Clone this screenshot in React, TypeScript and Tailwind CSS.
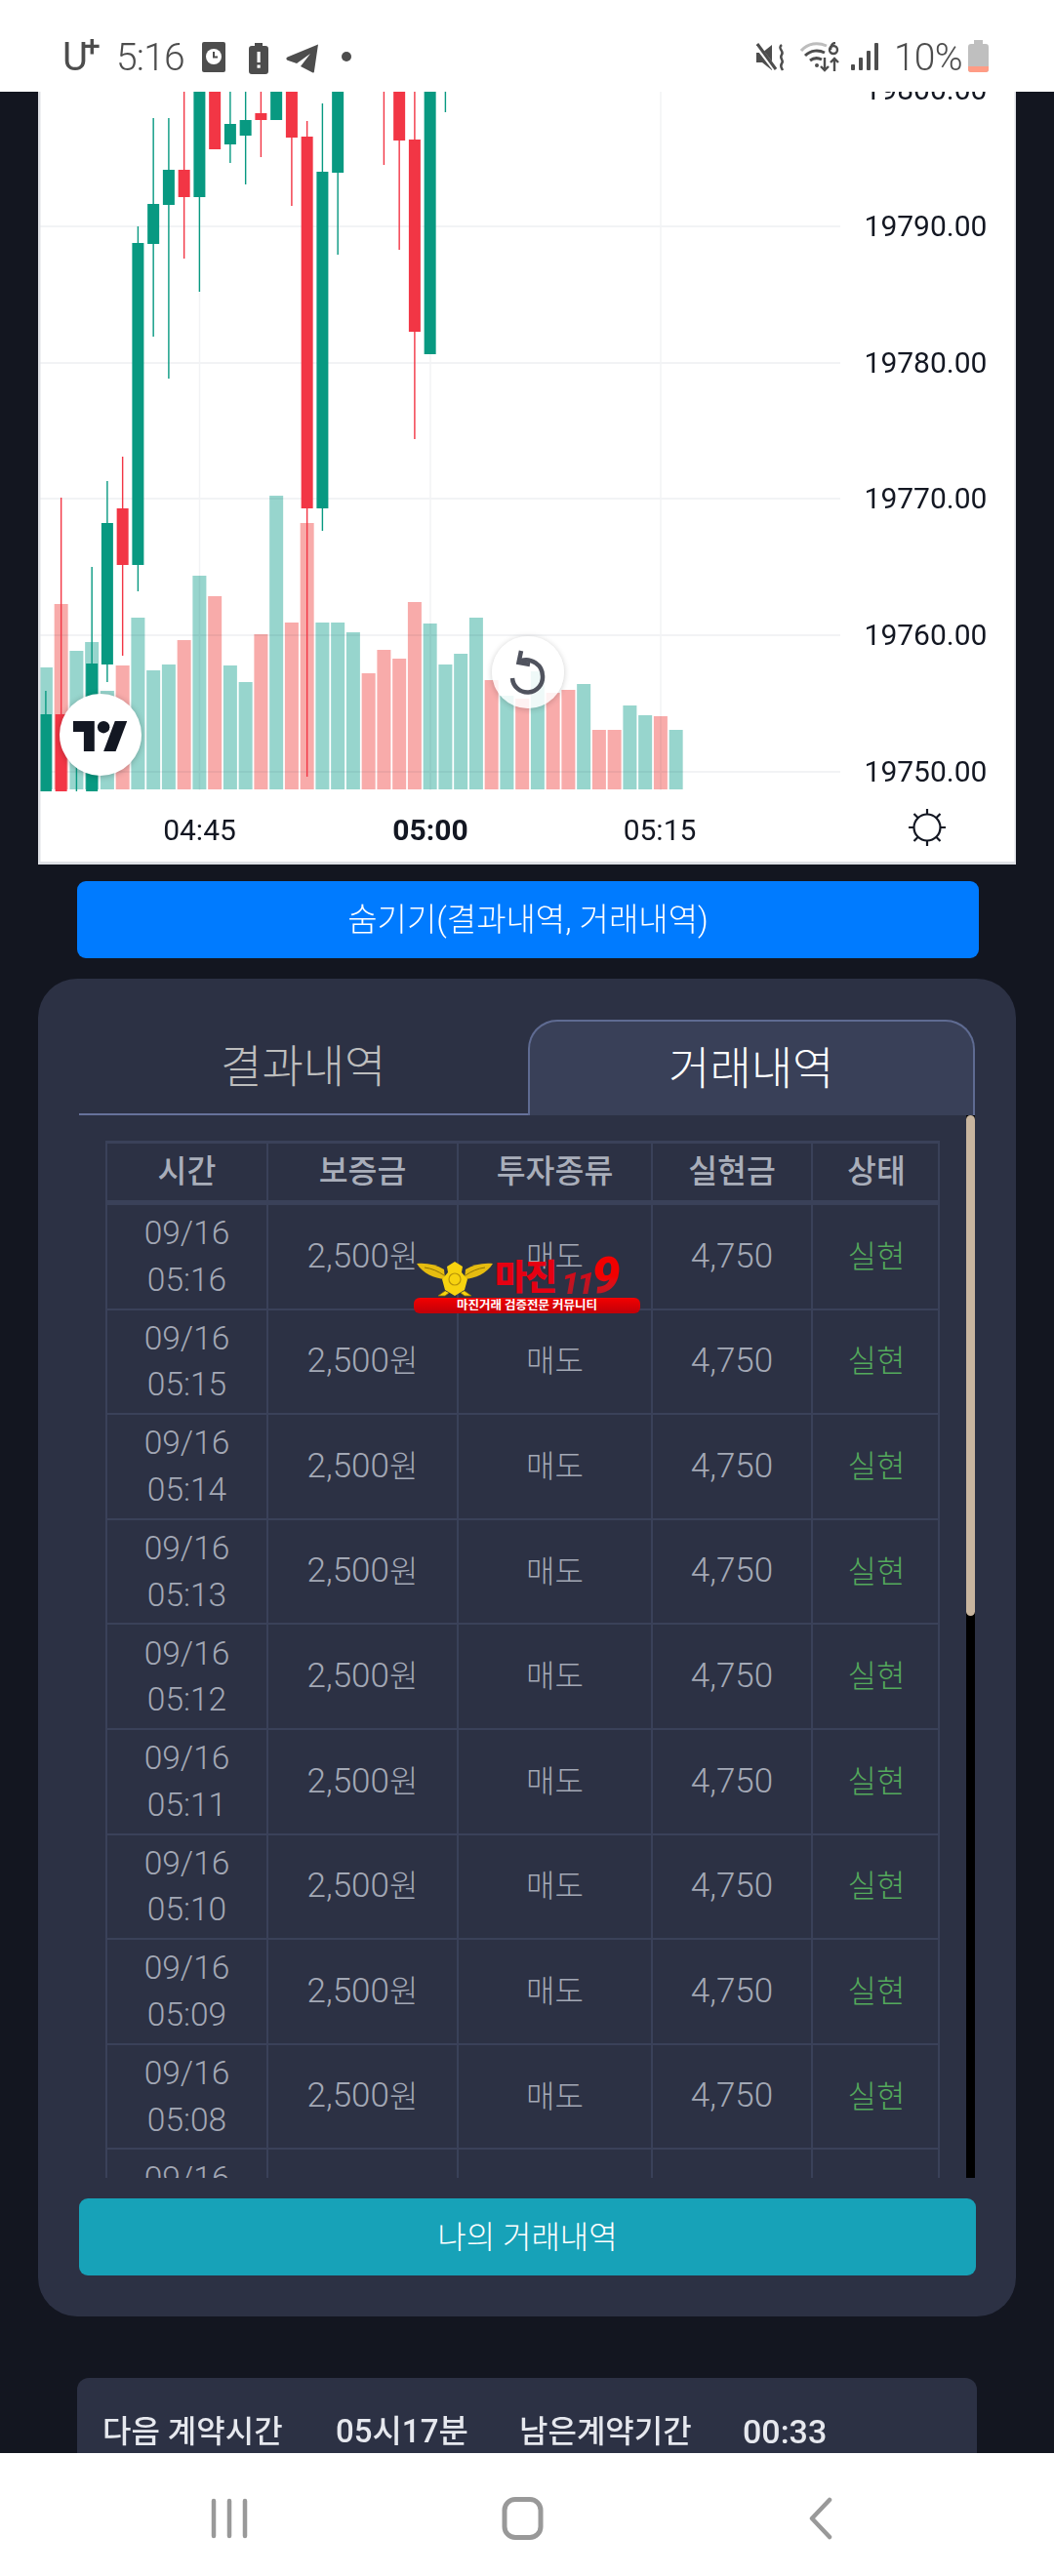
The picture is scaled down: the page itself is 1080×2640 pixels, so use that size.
import React from "react";

const G = "#089981";
const R = "#f23645";
type C = [number, string, number, number, number, number];
// index, colour, wickTop, bodyTop, bodyBottom, wickBottom
const candles: C[] = [
  [0, G, 708, 732, 815, 815],
  [1, R, 510, 732, 815, 815],
  [2, G, 780, 815, 815, 815],
  [3, G, 581, 680, 815, 815],
  [4, G, 493, 536, 681, 699],
  [5, R, 468, 521, 579, 672],
  [6, G, 232, 249, 579, 606],
  [7, G, 121, 209, 250, 345],
  [8, G, 121, 174, 210, 388],
  [9, R, 90, 174, 202, 265],
  [10, G, 90, 90, 202, 299],
  [11, R, 90, 90, 153, 153],
  [12, G, 90, 127, 148, 167],
  [13, G, 90, 123, 139, 189],
  [14, R, 90, 116, 123, 161],
  [15, G, 90, 90, 123, 123],
  [16, R, 90, 90, 141, 211],
  [17, R, 124, 140, 521, 796],
  [18, G, 106, 176, 521, 544],
  [19, G, 90, 90, 177, 261],
  [22, R, 90, 90, 90, 169],
  [23, R, 90, 90, 144, 256],
  [24, R, 90, 143, 340, 450],
  [25, G, 90, 90, 363, 363],
  [26, G, 90, 90, 90, 115],
];
const vols: [string, number][] = [
  ["g", 684], ["r", 619], ["g", 667], ["g", 658], ["g", 708], ["r", 682], ["g", 633], ["g", 687], ["g", 681], ["r", 656],
  ["g", 590], ["r", 611], ["g", 682], ["g", 699], ["r", 650], ["g", 508], ["r", 638], ["r", 536], ["g", 638], ["g", 638],
  ["g", 648], ["r", 690], ["r", 666], ["r", 675], ["r", 617], ["g", 639], ["g", 681], ["g", 670], ["g", 633], ["r", 697],
  ["g", 713], ["r", 716], ["g", 688], ["r", 710], ["r", 707], ["g", 701], ["r", 748], ["r", 748], ["g", 723], ["g", 733],
  ["r", 734], ["g", 748],
];
const cx = (i: number) => 46.9 + 15.75 * i;
const prices: [string, number][] = [
  ["19800.00", 92], ["19790.00", 232], ["19780.00", 372], ["19770.00", 511], ["19760.00", 651], ["19750.00", 791],
];
const times = ["05:16", "05:15", "05:14", "05:13", "05:12", "05:11", "05:10", "05:09", "05:08", "05:07"];
const cols = "grid grid-cols-[165px_195px_199px_164px_132px]";
const cell = "flex items-center justify-center border-l-2 border-[#3a4159] text-center";

function Chart() {
  return (
    <svg viewBox="39 94 1003 792" width={1003} height={792} className="block font-['Roboto',sans-serif]">
      <rect x="39" y="94" width="1003" height="792" fill="#ffffff" />
      {[232, 372, 511, 651, 791].map((y) => (
        <rect key={y} x="41" y={y - 1} width="820" height="2" fill="#f2f3f5" />
      ))}
      {[204.5, 441, 677].map((x) => (
        <rect key={x} x={x - 0.75} y="94" width="1.5" height="716" fill="#f2f3f5" />
      ))}
      {vols.map(([c, top], i) => (
        <rect key={i} x={cx(i) - 7} y={top} width="14" height={809 - top} fill={c === "g" ? "#95d4cc" : "#f8a9a8"} fillOpacity={0.98} style={{ mixBlendMode: "multiply" }} />
      ))}
      {candles.map(([i, col, wt, bt, bb, wb]) => (
        <g key={i} fill={col}>
          <rect x={cx(i) - 0.7} y={wt} width="1.4" height={wb - wt} />
          {bb > bt && <rect x={cx(i) - 6} y={bt} width="12" height={bb - bt} />}
        </g>
      ))}
      <rect x="39" y="811" width="1003" height="75" fill="#ffffff" />
      <rect x="861" y="94" width="181" height="792" fill="#ffffff" />
      {prices.map(([p, y]) => (
        <text key={p} x="948.500" y={y + 10} textAnchor="middle" fontSize="30" fill="#131722">{p}</text>
      ))}
      <text x="204.5" y="861" textAnchor="middle" fontSize="30" fill="#131722">04:45</text>
      <text x="441" y="861" textAnchor="middle" fontSize="30" fontWeight="700" fill="#131722">05:00</text>
      <text x="676" y="861" textAnchor="middle" fontSize="30" fill="#131722">05:15</text>
      <g stroke="#131722" strokeWidth="2.2" fill="none">
        <circle cx="950" cy="848" r="13.5" />
        <path d="M950 829v6M950 861v6M931 848h6M963 848h6M936.500 834l4 4M959.500 858l4 4M963.500 834l-4 4M940.500 858l-4 4" />
      </g>
      <rect x="39" y="94" width="2.5" height="792" fill="#dfe1e6" />
      <rect x="1039.5" y="94" width="2.5" height="792" fill="#dfe1e6" />
      <rect x="39" y="883" width="1003" height="3" fill="#dfe1e6" />
    </svg>
  );
}

function StatusBar() {
  return (
    <div className="flex h-[94px] shrink-0 items-start justify-between bg-white pl-[64px] pr-[67px] pt-[40px] text-[#4d4d4d]">
      <div className="flex items-start">
        <span className="relative block w-[41px] text-[40px] font-normal leading-[38px]">
          U
          <span className="absolute left-[22px] top-[-8px] text-[30px] font-medium leading-[30px]">+</span>
        </span>
        <span className="ml-[14px] w-[70px] text-[39px] font-light leading-[38px] tracking-[-0.8px]">5:16</span>
        <svg width="24" height="32" viewBox="0 0 24 32" className="ml-[18px] mt-[3px]">
          <rect width="24" height="31" rx="2" fill="#4d4d4d" />
          <circle cx="12" cy="15" r="8" fill="#fff" />
          <path d="M12 10v5.5h4" stroke="#4d4d4d" strokeWidth="2" fill="none" />
        </svg>
        <svg width="20" height="32" viewBox="0 0 20 32" className="ml-[24px] mt-[4px]">
          <path d="M6 0h8v3h3a3 3 0 0 1 3 3v23a3 3 0 0 1-3 3H3a3 3 0 0 1-3-3V6a3 3 0 0 1 3-3h3z" fill="#4d4d4d" />
          <rect x="8.500" y="9" width="3.200" height="11" fill="#fff" />
          <rect x="8.500" y="22.500" width="3.200" height="3.200" fill="#fff" />
        </svg>
        <svg width="34" height="30" viewBox="0 0 34 30" className="ml-[18px] mt-[5px]">
          <path d="M33 0.500 1.500 13.500c-1.500.7-1.500 2.500 0 3.200L11 20 25 10 15 23l12.500 6.500c.8.3 1.300-.3 1.400-1z" fill="#4d4d4d" />
        </svg>
        <span className="ml-[23px] mt-[13px] block h-[10px] w-[10px] rounded-full bg-[#4d4d4d]" />
      </div>
      <div className="flex items-start">
        <svg width="30" height="30" viewBox="0 0 30 30" className="mt-[4px]">
          <path d="M0 10h6l10-8v26L6 20H0z" fill="#4d4d4d" />
          <path d="M0 2 19 27" stroke="#fff" strokeWidth="5" />
          <path d="M1 1 20 27" stroke="#4d4d4d" strokeWidth="3" />
          <path d="M26 2c-5 4 3 6 0 10-3 4 3 6 0 9-2 3 0 5 1 7" stroke="#4d4d4d" strokeWidth="2.500" fill="none" />
        </svg>
        <svg width="42" height="31" viewBox="0 0 42 31" className="ml-[15px] mt-[3px]">
          <path d="M1 9C8 1 18 0 27 4" stroke="#bdbdbd" strokeWidth="3" fill="none" />
          <path d="M5 14c6-6 14-6 20-3M10 19c4-3 8-3 12-1" stroke="#4d4d4d" strokeWidth="3" fill="none" />
          <circle cx="17" cy="24" r="2" fill="#4d4d4d" />
          <circle cx="34" cy="8" r="4" stroke="#4d4d4d" strokeWidth="2.400" fill="none" />
          <path d="M31 8c0-4 2-7 5-7" stroke="#4d4d4d" strokeWidth="2.400" fill="none" />
          <path d="M25 16v13M21 25l4 4 4-4M35 30V17M31 21l4-4 4 4" stroke="#4d4d4d" strokeWidth="2.400" fill="none" />
        </svg>
        <svg width="28" height="30" viewBox="0 0 28 30" className="ml-[10px] mt-[4px]">
          <rect x="0" y="22" width="4" height="6" rx="1" fill="#4d4d4d" />
          <rect x="8" y="15" width="4" height="13" rx="1" fill="#4d4d4d" />
          <rect x="16" y="8" width="4" height="20" rx="1" fill="#4d4d4d" />
          <rect x="24" y="0" width="4" height="28" rx="1" fill="#4d4d4d" />
        </svg>
        <span className="ml-[16px] w-[69px] text-[39px] font-light leading-[38px] tracking-[-0.8px]">10%</span>
        <svg width="21" height="33" viewBox="0 0 21 33" className="ml-[7px] mt-[1px]">
          <path d="M6 0h9v4h3a3 3 0 0 1 3 3v23a3 3 0 0 1-3 3H3a3 3 0 0 1-3-3V7a3 3 0 0 1 3-3h3z" fill="#bfbfbf" />
          <path d="M0 27h21v3a3 3 0 0 1-3 3H3a3 3 0 0 1-3-3z" fill="#ff9c85" />
        </svg>
      </div>
    </div>
  );
}

function Watermark() {
  return (
    <div className="absolute left-[385px] top-[290px] h-[53px] w-[232px]">
      <div className="flex h-[37px] items-start pl-[3px]">
        <svg width="78" height="37" viewBox="0 0 78 37">
          <path d="M0 2C10 1 20 3 28 8l1 10C18 17 6 12 0 2z" fill="#e6bc10" />
          <path d="M78 2C68 1 58 3 50 8l-1 10C60 17 72 12 78 2z" fill="#e6bc10" />
          <path d="M8 6c8 1 14 4 20 8M70 6c-8 1-14 4-20 8" stroke="#8f7406" strokeWidth="1" fill="none" />
          <path d="M39 0l8 5-1 6 6 7-3 11-10 6-10-6-3-11 6-7-1-6z" fill="#f7d30f" />
          <circle cx="39" cy="18" r="6" fill="none" stroke="#b8940a" strokeWidth="1.200" />
          <path d="M29 30l-7 5h7l4-3M49 30l7 5h-7l-4-3" fill="#f7d30f" stroke="#8f7406" strokeWidth="0.800" />
        </svg>
        <span className="ml-[2px] mt-[-7px] text-[36px] font-black leading-[48px] tracking-[-2px] text-[#e60012]">마진</span>
        <span className="ml-[6px] mt-[4px] bg-gradient-to-b from-[#e00010] to-[#a81a28] bg-clip-text text-[32px] font-black italic leading-[36px] tracking-[-2px] text-transparent">11</span>
        <span className="ml-[-1px] mt-[-11px] bg-gradient-to-b from-[#f20000] from-50% to-[#a81a28] bg-clip-text text-[52px] font-black italic leading-[52px] text-transparent">9</span>
      </div>
      <div className="flex h-[16px] items-center justify-center rounded-[6px] bg-gradient-to-b from-[#f40000] to-[#c00008] text-[12.5px] font-bold leading-[16px] text-white">
        마진거래 검증전문 커뮤니티
      </div>
    </div>
  );
}

function TradeRow({ t }: { t: string }) {
  return (
    <div className={`${cols} h-[107.6px] border-b-2 border-r-2 border-[#3a4159] text-[32px] font-light text-[#a3a8b5]`}>
      <div className={`${cell} flex-col text-[33.5px] leading-[47.6px]`}>
        <span>09/16</span>
        <span>{t}</span>
      </div>
      <div className={cell}>
        <span className="text-[35px]">2,500</span>원
      </div>
      <div className={cell}>매도</div>
      <div className={`${cell} text-[35px]`}>4,750</div>
      <div className={`${cell} text-[#54a95c]`}>실현</div>
    </div>
  );
}

export default function App() {
  return (
    <div className="flex h-[2640px] w-[1080px] flex-col overflow-hidden bg-[#131620] font-['Roboto','Noto_Sans_CJK_KR',sans-serif]">
      <StatusBar />
      <main className="min-h-0 flex-1 overflow-hidden">
        <div className="relative mx-[39px] h-[792px] overflow-hidden">
          <Chart />
          <div className="absolute left-[22px] top-[617px] flex h-[84px] w-[84px] items-center justify-center rounded-full bg-white shadow-[0_1px_6px_rgba(0,0,0,0.25)]">
            <svg width="56" height="44" viewBox="0 0 36 28" fill="#131722">
              <path d="M14 25H7V12H0V5h14v20zM28 25h-8l7.500-20h8L28 25z" />
              <circle cx="20" cy="9" r="4" />
            </svg>
          </div>
          <div className="absolute left-[465px] top-[558px] flex h-[74px] w-[74px] items-center justify-center rounded-full bg-white/85 shadow-[0_1px_6px_rgba(0,0,0,0.2)]">
            <svg width="40" height="46" viewBox="0 0 40 46" fill="none" stroke="#50535e" strokeWidth="4.500">
              <path d="M13 11c10-3 22 4 22 16a15.500 15.500 0 0 1-31 2" />
              <path d="M13 1 10.500 13 22 15" />
            </svg>
          </div>
        </div>
        <button className="mx-[79px] mt-[17px] block h-[79px] w-[924px] rounded-[9px] bg-[#007bff] text-[33px] font-light text-white">
          숨기기(결과내역, 거래내역)
        </button>
        <section className="relative mx-[39px] mt-[21px] h-[1371px] rounded-[40px] bg-[#2c3144] px-[42px] pt-[42px]">
          <div className="flex h-[98px]">
            <div className="flex w-[460px] items-center justify-center border-b-2 border-[#67729b] text-[46px] font-light text-[#bdbdbd]">
              결과내역
            </div>
            <div className="flex w-[459px] items-center justify-center rounded-t-[30px] border-x-2 border-t-2 border-[#5f6b92] bg-[#394058] text-[46px] font-light text-white">
              거래내역
            </div>
          </div>
          <div className="flex h-[1089px] justify-between overflow-hidden pl-[27px]">
            <div className="mt-[26px] w-[855px]">
              <div className={`${cols} h-[66px] border-b-[5px] border-r-2 border-t-[3px] border-[#3a4159] text-[32.5px] font-medium text-[#a9aeba]`}>
                <div className={cell}>시간</div>
                <div className={cell}>보증금</div>
                <div className={cell}>투자종류</div>
                <div className={cell}>실현금</div>
                <div className={cell}>상태</div>
              </div>
              {times.map((t) => (
                <TradeRow key={t} t={t} />
              ))}
            </div>
            <div className="h-full w-[9px] bg-black">
              <div className="h-[513px] rounded-full bg-[#c8b59f]" />
            </div>
          </div>
          <button className="mt-[21px] block h-[79px] w-[919px] rounded-[9px] bg-[#17a2b8] text-[32px] font-light text-white">
            나의 거래내역
          </button>
          <Watermark />
        </section>
        <div className="mx-[79px] mt-[63px] flex h-[200px] items-start rounded-[12px] bg-[#2c3144] pl-[26px] pt-[33px] text-[32px] font-medium leading-[44px] text-[#e6e8ee]">
          <span className="w-[239px]">다음 계약시간</span>
          <span className="w-[188px] text-[33px]">05시17분</span>
          <span className="w-[229px]">남은계약기간</span>
          <span className="text-[34px]">00:33</span>
        </div>
      </main>
      <nav className="flex h-[126px] shrink-0 items-start bg-white pt-[45px]">
        <svg width="40" height="44" viewBox="0 0 40 44" className="ml-[215px]" stroke="#999" strokeWidth="4.500" strokeLinecap="round">
          <path d="M4 4v36M20 4v36M36 4v36" />
        </svg>
        <svg width="44" height="44" viewBox="0 0 44 44" className="ml-[259px]" fill="none" stroke="#999" strokeWidth="5">
          <rect x="3" y="2.500" width="37" height="39" rx="11" />
        </svg>
        <svg width="26" height="44" viewBox="0 0 26 44" className="ml-[270px]" fill="none" stroke="#999" strokeWidth="4.500" strokeLinecap="round" strokeLinejoin="round">
          <path d="M22 3 4 22l18 19" />
        </svg>
      </nav>
    </div>
  );
}
